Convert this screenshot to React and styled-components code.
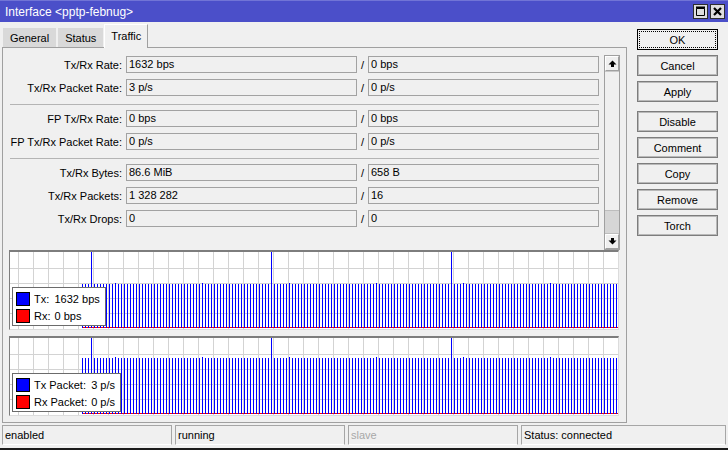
import React from "react"
import styled, { createGlobalStyle } from "styled-components"

const GlobalStyle = createGlobalStyle`
  html, body {
    margin: 0;
    padding: 0;
    background: #f0f0f0;
  }
  body {
    font-family: "Liberation Sans", Arial, sans-serif;
    font-size: 11px;
    color: #000;
  }
`

const Window = styled.div`
  width: 728px;
  height: 450px;
  box-sizing: border-box;
  display: flex;
  flex-direction: column;
  background: #f0f0f0;
  border-bottom: 2px solid #1c1c1c;
  overflow: hidden;
`

const TitleBar = styled.div`
  height: 22px;
  flex: none;
  box-sizing: border-box;
  display: flex;
  align-items: center;
  padding: 0 3px 0 5px;
  background: #4b4fc9;
  border-top: 1px solid #7174d6;
  color: #fff;
  font-size: 12px;
`

const Title = styled.span`
  flex: 1;
`

const WinButton = styled.div`
  width: 15px;
  height: 15px;
  box-sizing: border-box;
  margin-left: 2px;
  border: 1px solid #2e2e2e;
  background: #dedede;
  display: flex;
  align-items: center;
  justify-content: center;
`

const Main = styled.div`
  height: 402px;
  flex: none;
  display: flex;
`

const LeftColumn = styled.div`
  width: 625px;
  margin-left: 2px;
  display: flex;
  flex-direction: column;
`

const TabStrip = styled.div`
  height: 25px;
  flex: none;
  display: flex;
  align-items: flex-end;
  padding-left: 1px;
  position: relative;
  z-index: 1;
`

const Tab = styled.div`
  box-sizing: border-box;
  height: ${({ $active }) => ($active ? 24 : 19)}px;
  margin-bottom: ${({ $active }) => ($active ? -1 : 0)}px;
  margin-right: ${({ $gap }) => $gap}px;
  padding: 0 6px ${({ $active }) => ($active ? 2 : 0)}px;
  display: flex;
  align-items: center;
  background: ${({ $active }) => ($active ? "#f0f0f0" : "#d9d9d9")};
  border: 1px solid ${({ $active }) => ($active ? "#a0a0a0" : "#d9d9d9")};
  border-left-color: ${({ $active }) => ($active ? "#ffffff" : "#d9d9d9")};
  border-top-color: ${({ $active }) => ($active ? "#ffffff" : "#d9d9d9")};
  border-bottom: none;
`

const Panel = styled.div`
  height: 376px;
  box-sizing: border-box;
  border: 1px solid #a0a0a0;
  display: flex;
  flex-direction: column;
`

const FormArea = styled.div`
  height: 202px;
  flex: none;
  box-sizing: border-box;
  padding-top: 7px;
  display: flex;
`

const Fields = styled.div`
  width: 597px;
  padding-top: 1px;
  display: flex;
  flex-direction: column;
`

const Row = styled.div`
  display: flex;
  align-items: center;
  height: 17px;
  flex: none;
  margin-bottom: 6px;
`

const Label = styled.div`
  width: 121px;
  box-sizing: border-box;
  padding-right: 2px;
  text-align: right;
  white-space: nowrap;
`

const Field = styled.div`
  width: 231px;
  height: 17px;
  box-sizing: border-box;
  margin-left: ${({ $first }) => ($first ? 2 : 0)}px;
  padding-left: 2px;
  border: 1px solid #a2a2a2;
  line-height: 15px;
  white-space: nowrap;
`

const Slash = styled.div`
  width: 11px;
  text-align: center;
`

const Separator = styled.div`
  width: 589px;
  height: 1px;
  flex: none;
  margin: 2px 0 5px 7px;
  background: #b4b4b4;
`

const ScrollBar = styled.div`
  width: 16px;
  height: 195px;
  margin-left: 4px;
  box-sizing: border-box;
  border: 1px solid #a0a0a0;
  display: flex;
  flex-direction: column;
`

const ScrollButton = styled.div`
  height: 15px;
  flex: none;
  box-sizing: border-box;
  border: 1px solid #ffffff;
  border-right-color: #a0a0a0;
  border-bottom-color: #a0a0a0;
  display: flex;
  align-items: center;
  justify-content: center;
`

const ScrollTrack = styled.div`
  flex: 1;
  display: flex;
  flex-direction: column;
  justify-content: flex-end;
  border-top: 1px solid #c8c8c8;
`

const ScrollThumb = styled.div`
  height: 22px;
  background: #d6d6d6;
  border-top: 1px solid #bdbdbd;
  border-bottom: 1px solid #bdbdbd;
`

const Graph = styled.div`
  position: relative;
  width: 610px;
  height: 80px;
  flex: none;
  box-sizing: border-box;
  margin: 0 0 6px 6px;
  background: #fff;
  border-top: 2px solid #7d7d7d;
  border-left: 1px solid #7d7d7d;
  border-right: 1px solid #dcdcdc;
  border-bottom: 1px solid #dcdcdc;

  svg {
    display: block;
  }
`

const Legend = styled.div`
  position: absolute;
  left: 2px;
  top: 35px;
  box-sizing: border-box;
  padding: 2px 5px 1px 3px;
  background: #fff;
  border: 1px solid #6b6b6b;
  display: grid;
  grid-template-columns: 14px auto auto;
  grid-auto-rows: 17px;
  column-gap: 4px;
  align-items: center;
  white-space: nowrap;
`

const Swatch = styled.div`
  width: 14px;
  height: 14px;
  box-sizing: border-box;
  border: 1px solid #000;
  background: ${({ $color }) => $color};
`

const ButtonColumn = styled.div`
  width: 81px;
  margin-left: 10px;
  padding-top: 7px;
  display: flex;
  flex-direction: column;
`

const Button = styled.div`
  position: relative;
  height: 21px;
  flex: none;
  box-sizing: border-box;
  margin-bottom: 5px;
  margin-top: ${({ $group }) => ($group ? 4 : 0)}px;
  display: flex;
  align-items: center;
  justify-content: center;
  border: 1px solid ${({ $default }) => ($default ? "#000" : "#7d7d7d")};
  box-shadow: inset 0 0 0 1px ${({ $default }) => ($default ? "#f0f0f0" : "#b9b9b9")};

  &::after {
    content: "";
    display: ${({ $default }) => ($default ? "block" : "none")};
    position: absolute;
    inset: 1px;
    border: 1px dotted #000;
  }
`

const StatusBar = styled.div`
  height: 24px;
  flex: none;
  box-sizing: border-box;
  padding: 1px 2px 0 2px;
  display: flex;
  gap: 3px;
`

const StatusCell = styled.div`
  width: ${({ $width }) => ($width ? `${$width}px` : "auto")};
  flex: ${({ $width }) => ($width ? "none" : "1")};
  height: 20px;
  box-sizing: border-box;
  padding-left: 2px;
  border: 1px solid #a6a6a6;
  border-bottom-color: #ffffff;
  line-height: 18px;
  color: ${({ $muted }) => ($muted ? "#a8a8a8" : "#000")};
`

const formRows = [
  [
    ["Tx/Rx Rate:", "1632 bps", "0 bps"],
    ["Tx/Rx Packet Rate:", "3 p/s", "0 p/s"],
  ],
  [
    ["FP Tx/Rx Rate:", "0 bps", "0 bps"],
    ["FP Tx/Rx Packet Rate:", "0 p/s", "0 p/s"],
  ],
  [
    ["Tx/Rx Bytes:", "86.6 MiB", "658 B"],
    ["Tx/Rx Packets:", "1 328 282", "16"],
    ["Tx/Rx Drops:", "0", "0"],
  ],
]

const buttons = [
  { label: "OK", isDefault: true },
  { label: "Cancel" },
  { label: "Apply" },
  { label: "Disable", group: true },
  { label: "Comment" },
  { label: "Copy" },
  { label: "Remove" },
  { label: "Torch" },
]

function Chart({ barTop }) {
  const w = 608
  const h = 77
  let grid = ""
  for (let x = 8; x < w; x += 15) grid += `M${x + 0.5} 0V${h}`
  for (let y = 16; y < h - 1; y += 15) grid += `M0 ${y + 0.5}H${w}`
  let bars = ""
  for (let k = 0; 72 + 3 * k < w; k++) {
    const x = 72 + 3 * k
    const top = k % 60 === 3 ? 0 : barTop - (k % 29 === 11 ? 1 : 0)
    bars += `M${x + 0.5} ${top}V76`
  }
  return (
    <svg width={w} height={h}>
      <path d={grid} stroke="#d3d3d3" strokeWidth="1" fill="none" />
      <path d={`M72 75.5H${w}`} stroke="#ff0000" strokeWidth="1" />
      <path d={bars} stroke="#0000ff" strokeWidth="1" />
    </svg>
  )
}

function TrafficGraph({ barTop, items }) {
  return (
    <Graph>
      <Chart barTop={barTop} />
      <Legend>
        {items.map(([color, name, value]) => (
          <React.Fragment key={name}>
            <Swatch $color={color} />
            <span>{name}</span>
            <span>{value}</span>
          </React.Fragment>
        ))}
      </Legend>
    </Graph>
  )
}

function Arrow({ down }) {
  return (
    <svg width="9" height="7" viewBox="0 0 9 7" style={down ? { transform: "rotate(180deg)" } : undefined}>
      <path d="M0.5 4.5L4.5 0.5L8.5 4.5Z" fill="#000" />
      <rect x="3" y="4" width="3" height="3" fill="#000" />
    </svg>
  )
}

export default function App() {
  return (
    <Window>
      <GlobalStyle />
      <TitleBar>
        <Title>Interface &lt;pptp-febnug&gt;</Title>
        <WinButton>
          <svg width="11" height="11" viewBox="0 0 11 11">
            <path d="M1.5 2.5H9.5V9.5H1.5Z" stroke="#000" fill="none" />
            <path d="M1 1.5H10" stroke="#000" strokeWidth="2" />
          </svg>
        </WinButton>
        <WinButton>
          <svg width="11" height="11" viewBox="0 0 11 11">
            <path d="M2 2L9 9M9 2L2 9" stroke="#000" strokeWidth="2.2" />
          </svg>
        </WinButton>
      </TitleBar>
      <Main>
        <LeftColumn>
          <TabStrip>
            <Tab $gap={2}>General</Tab>
            <Tab $gap={1}>Status</Tab>
            <Tab $active>Traffic</Tab>
          </TabStrip>
          <Panel>
            <FormArea>
              <Fields>
                {formRows.map((group, gi) => (
                  <React.Fragment key={gi}>
                    {gi > 0 && <Separator />}
                    {group.map(([label, tx, rx]) => (
                      <Row key={label}>
                        <Label>{label}</Label>
                        <Field $first>{tx}</Field>
                        <Slash>/</Slash>
                        <Field>{rx}</Field>
                      </Row>
                    ))}
                  </React.Fragment>
                ))}
              </Fields>
              <ScrollBar>
                <ScrollButton>
                  <Arrow />
                </ScrollButton>
                <ScrollTrack>
                  <ScrollThumb />
                </ScrollTrack>
                <ScrollButton>
                  <Arrow down />
                </ScrollButton>
              </ScrollBar>
            </FormArea>
            <TrafficGraph
              barTop={32}
              items={[
                ["#0000ff", "Tx:", "1632 bps"],
                ["#ff0000", "Rx:", "0 bps"],
              ]}
            />
            <TrafficGraph
              barTop={20}
              items={[
                ["#0000ff", "Tx Packet:", "3 p/s"],
                ["#ff0000", "Rx Packet:", "0 p/s"],
              ]}
            />
          </Panel>
        </LeftColumn>
        <ButtonColumn>
          {buttons.map((b) => (
            <Button key={b.label} $default={b.isDefault} $group={b.group}>
              {b.label}
            </Button>
          ))}
        </ButtonColumn>
      </Main>
      <StatusBar>
        <StatusCell $width={170}>enabled</StatusCell>
        <StatusCell $width={170}>running</StatusCell>
        <StatusCell $width={170} $muted>slave</StatusCell>
        <StatusCell>Status: connected</StatusCell>
      </StatusBar>
    </Window>
  )
}
